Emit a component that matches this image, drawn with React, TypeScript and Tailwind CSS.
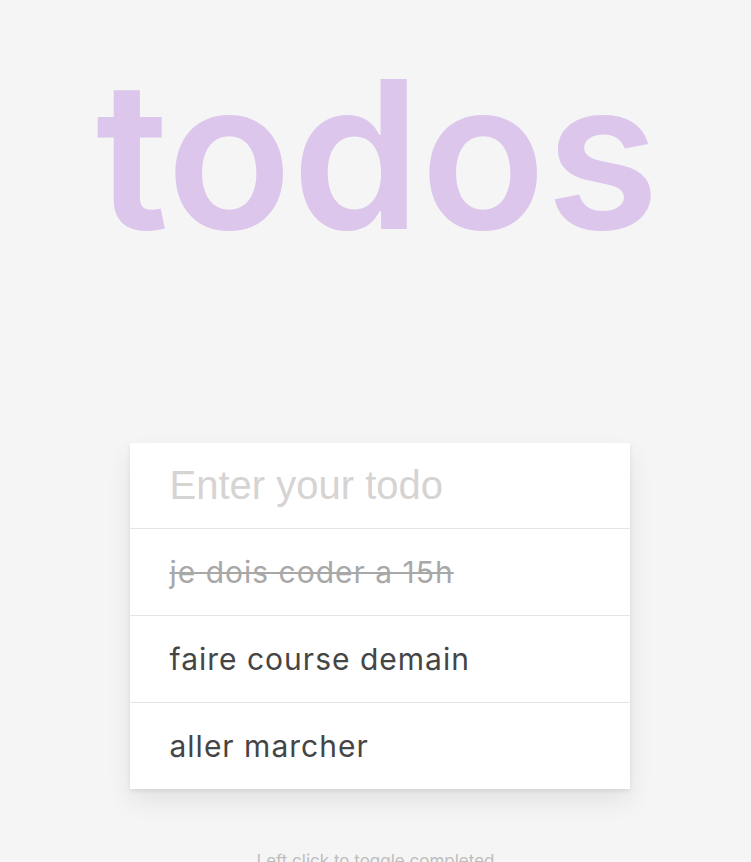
import { useState } from 'react';

interface Todo {
  text: string;
  done: boolean;
}

const TodoRow = ({ todo, onToggle }: { todo: Todo; onToggle: () => void }) => (
  <li
    onClick={onToggle}
    className={`flex h-[87px] cursor-pointer items-center border-t border-[#e6e6e6] pl-10 pr-4 font-['Inter',sans-serif] text-[30px] tracking-[1px] ${
      todo.done ? 'text-[#a8a8a8] line-through decoration-2' : 'text-[#454545]'
    }`}
  >
    {todo.text}
  </li>
);

export default function App() {
  const [todos, setTodos] = useState<Todo[]>([
    { text: 'je dois coder a 15h', done: true },
    { text: 'faire course demain', done: false },
    { text: 'aller marcher', done: false },
  ]);
  const [value, setValue] = useState('');

  const toggle = (i: number) => {
    setTodos(todos.map((t, j) => (j === i ? { ...t, done: !t.done } : t)));
  };

  return (
    <div className="flex min-h-screen flex-col items-center bg-[#f5f5f5] font-['Inter',sans-serif]">
      <h1 className="mt-[51px] pl-[4px] text-[206px] font-semibold leading-none tracking-[0px] text-[#dcc6ec]">todos</h1>

      <div className="ml-[8px] mt-[186px] w-[500px] bg-white shadow-[0_2px_4px_rgba(0,0,0,0.08),0_12px_24px_rgba(0,0,0,0.08)]">
        <input
          value={value}
          onChange={(e) => setValue(e.target.value)}
          placeholder="Enter your todo"
          className="h-[85px] w-full bg-transparent pl-10 pr-4 font-['Liberation_Sans',Arial,sans-serif] text-[40px] text-[#454545] outline-none placeholder:text-[#d6d3d3]"
        />
        <ul>
          {todos.map((t, i) => (
            <TodoRow key={i} todo={t} onToggle={() => toggle(i)} />
          ))}
        </ul>
      </div>

      <p className="mt-[60px] text-[17px] text-[#bdbdbd]">Left click to toggle completed</p>
    </div>
  );
}
